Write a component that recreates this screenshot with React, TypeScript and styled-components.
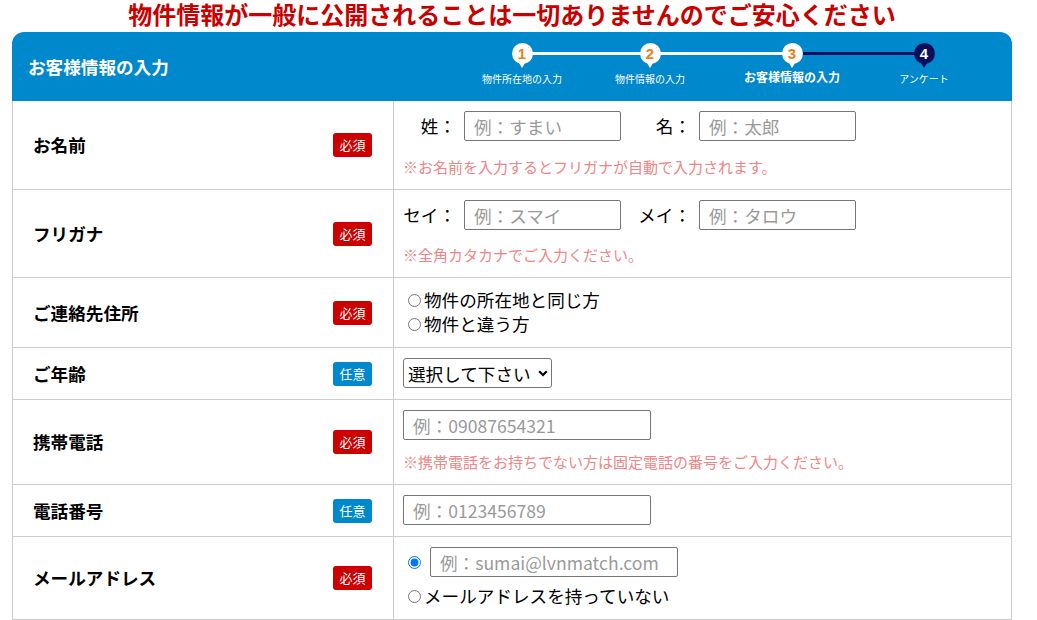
import React from "react";
import styled, { createGlobalStyle } from "styled-components";

const GlobalStyle = createGlobalStyle`
  html, body { margin: 0; padding: 0; background: #fff; }
  body {
    font-family: "Noto Sans CJK JP", "Noto Sans", sans-serif;
    color: #000;
    overflow: hidden;
  }
  * { box-sizing: border-box; }
`;

const Page = styled.div`
  width: 1037px;
  height: 620px;
  padding-left: 12px;
  overflow: hidden;
`;

const Notice = styled.h1`
  width: 1000px;
  height: 32px;
  margin: 0;
  padding-bottom: 4px;
  font-size: 24px;
  line-height: 28px;
  font-weight: 700;
  color: #c80000;
  text-align: center;
  letter-spacing: 0;
`;

const Header = styled.div`
  width: 1000px;
  height: 69px;
  background: #0088cc;
  border-radius: 12px 12px 0 0;
  display: flex;
  align-items: stretch;
  padding-left: 16px;
`;

const HeaderTitle = styled.h2`
  flex: 1;
  margin: 0;
  align-self: center;
  color: #fff;
  font-size: 17.6px;
  line-height: 24px;
  font-weight: 700;
`;

const Steps = styled.ol`
  display: flex;
  list-style: none;
  margin: 0 34px 0 0;
  padding: 0;
`;

const Step = styled.li<{ $w: number; $left?: string; $right?: string }>`
  position: relative;
  width: ${(p) => p.$w}px;
  display: flex;
  flex-direction: column;
  align-items: center;
  padding-top: 11px;
  &::before {
    content: "";
    position: absolute;
    top: 20px;
    left: 0;
    width: 50%;
    height: 3px;
    background: ${(p) => p.$left ?? "transparent"};
  }
  &::after {
    content: "";
    position: absolute;
    top: 20px;
    right: 0;
    width: 50%;
    height: 3px;
    background: ${(p) => p.$right ?? "transparent"};
  }
`;

const StepDot = styled.span<{ $dark?: boolean }>`
  position: relative;
  z-index: 1;
  width: 21px;
  height: 21px;
  border-radius: 50%;
  background: ${(p) => (p.$dark ? "#0a0f5c" : "#fff")};
  color: ${(p) => (p.$dark ? "#fff" : "#f07d22")};
  font-family: "Liberation Sans", Arial, sans-serif;
  font-size: 15px;
  font-weight: 700;
  line-height: 21px;
  text-align: center;
  &::after {
    content: "";
    position: absolute;
    left: 50%;
    bottom: -4px;
    transform: translateX(-50%);
    border-left: 3.5px solid transparent;
    border-right: 3.5px solid transparent;
    border-top: 5px solid ${(p) => (p.$dark ? "#0a0f5c" : "#fff")};
  }
`;

const StepLabel = styled.span<{ $active?: boolean }>`
  color: #fff;
  white-space: nowrap;
  font-size: ${(p) => (p.$active ? "12px" : "10px")};
  font-weight: ${(p) => (p.$active ? 700 : 400)};
  line-height: ${(p) => (p.$active ? "16px" : "14px")};
  margin-top: ${(p) => (p.$active ? "5px" : "8px")};
`;

const Form = styled.div`
  width: 1000px;
  border-left: 1px solid #ccc;
  border-right: 1px solid #ccc;
`;

const Row = styled.div`
  display: grid;
  grid-template-columns: 381px 1fr;
  border-bottom: 1px solid #ccc;
`;

const LabelCell = styled.div`
  display: flex;
  align-items: center;
  justify-content: space-between;
  padding: 0 21px 0 20px;
  border-right: 1px solid #ccc;
`;

const FieldName = styled.span`
  font-size: 17.6px;
  font-weight: 700;
  line-height: 24px;
`;

const Badge = styled.span<{ $optional?: boolean }>`
  width: 39px;
  height: 24px;
  border-radius: 3px;
  background: ${(p) => (p.$optional ? "#0088cc" : "#cc0000")};
  color: #fff;
  font-size: 13px;
  line-height: 24px;
  text-align: center;
`;

const FieldCell = styled.div`
  display: flex;
  flex-direction: column;
  justify-content: center;
  align-items: flex-start;
  padding: 10px 10px 11px 9px;
`;

const PairRow = styled.div`
  display: flex;
  align-items: center;
  gap: 17px;
`;

const Pair = styled.label`
  display: flex;
  align-items: center;
  gap: 8px;
`;

const PairLabel = styled.span`
  width: 53px;
  text-align: right;
  font-size: 17.6px;
  line-height: 24px;
  white-space: nowrap;
`;

const TextInput = styled.input<{ $w: number }>`
  width: ${(p) => p.$w}px;
  height: 30px;
  margin: 0;
  padding: 0 9px;
  border: 1px solid #767676;
  border-radius: 2px;
  font-family: "Noto Sans CJK JP", "Noto Sans", sans-serif;
  font-size: 17.6px;
  color: #000;
  background: #fff;
  &::placeholder { color: #9a9a9a; }
`;

const Note = styled.p<{ $gap: number }>`
  margin: ${(p) => p.$gap}px 0 0;
  font-size: 15px;
  line-height: 22px;
  color: #ef8585;
  white-space: nowrap;
`;

const Choice = styled.label`
  display: flex;
  align-items: center;
  font-size: 17.6px;
  line-height: 24px;
  white-space: nowrap;
`;

const Radio = styled.input`
  width: 13px;
  height: 13px;
  margin: 0 3px 0 5px;
`;

const EmailLine = styled.div`
  display: flex;
  align-items: center;
  gap: 6px;
`;

const ChoiceBelow = styled(Choice)`
  margin-top: 7px;
`;

const SelectBox = styled.div`
  position: relative;
  width: 149px;
  height: 30px;
`;

const Select = styled.select`
  appearance: none;
  width: 100%;
  height: 100%;
  margin: 0;
  padding: 0 20px 0 4px;
  border: 1px solid #767676;
  border-radius: 3px;
  background: #fff;
  color: #000;
  font-family: "Noto Sans CJK JP", "Noto Sans", sans-serif;
  font-size: 17.6px;
`;

const Chevron = styled.svg`
  position: absolute;
  right: 4px;
  top: 12px;
  width: 10px;
  height: 7px;
  pointer-events: none;
`;

export default function App() {
  return (
    <>
      <GlobalStyle />
      <Page>
        <Notice>物件情報が一般に公開されることは一切ありませんのでご安心ください</Notice>
        <Header>
          <HeaderTitle>お客様情報の入力</HeaderTitle>
          <Steps>
            <Step $w={128} $right="#fff">
              <StepDot>1</StepDot>
              <StepLabel>物件所在地の入力</StepLabel>
            </Step>
            <Step $w={128} $left="#fff" $right="#fff">
              <StepDot>2</StepDot>
              <StepLabel>物件情報の入力</StepLabel>
            </Step>
            <Step $w={156} $left="#fff" $right="#0a0f5c">
              <StepDot>3</StepDot>
              <StepLabel $active>お客様情報の入力</StepLabel>
            </Step>
            <Step $w={108} $left="#0a0f5c">
              <StepDot $dark>4</StepDot>
              <StepLabel>アンケート</StepLabel>
            </Step>
          </Steps>
        </Header>
        <Form>
          <Row>
            <LabelCell>
              <FieldName>お名前</FieldName>
              <Badge>必須</Badge>
            </LabelCell>
            <FieldCell>
              <PairRow>
                <Pair>
                  <PairLabel>姓：</PairLabel>
                  <TextInput $w={157} placeholder="例：すまい" />
                </Pair>
                <Pair>
                  <PairLabel>名：</PairLabel>
                  <TextInput $w={157} placeholder="例：太郎" />
                </Pair>
              </PairRow>
              <Note $gap={15}>※お名前を入力するとフリガナが自動で入力されます。</Note>
            </FieldCell>
          </Row>
          <Row>
            <LabelCell>
              <FieldName>フリガナ</FieldName>
              <Badge>必須</Badge>
            </LabelCell>
            <FieldCell>
              <PairRow>
                <Pair>
                  <PairLabel>セイ：</PairLabel>
                  <TextInput $w={157} placeholder="例：スマイ" />
                </Pair>
                <Pair>
                  <PairLabel>メイ：</PairLabel>
                  <TextInput $w={157} placeholder="例：タロウ" />
                </Pair>
              </PairRow>
              <Note $gap={14}>※全角カタカナでご入力ください。</Note>
            </FieldCell>
          </Row>
          <Row>
            <LabelCell>
              <FieldName>ご連絡先住所</FieldName>
              <Badge>必須</Badge>
            </LabelCell>
            <FieldCell>
              <Choice>
                <Radio type="radio" name="addr" />
                物件の所在地と同じ方
              </Choice>
              <Choice>
                <Radio type="radio" name="addr" />
                物件と違う方
              </Choice>
            </FieldCell>
          </Row>
          <Row>
            <LabelCell>
              <FieldName>ご年齢</FieldName>
              <Badge $optional>任意</Badge>
            </LabelCell>
            <FieldCell>
              <SelectBox>
                <Select defaultValue="">
                  <option value="">選択して下さい</option>
                </Select>
                <Chevron viewBox="0 0 10 7">
                  <path d="M1.2 1.2 L5 5 L8.8 1.2" fill="none" stroke="#000" strokeWidth="2.2" />
                </Chevron>
              </SelectBox>
            </FieldCell>
          </Row>
          <Row>
            <LabelCell>
              <FieldName>携帯電話</FieldName>
              <Badge>必須</Badge>
            </LabelCell>
            <FieldCell>
              <TextInput $w={248} placeholder="例：09087654321" />
              <Note $gap={11}>※携帯電話をお持ちでない方は固定電話の番号をご入力ください。</Note>
            </FieldCell>
          </Row>
          <Row>
            <LabelCell>
              <FieldName>電話番号</FieldName>
              <Badge $optional>任意</Badge>
            </LabelCell>
            <FieldCell>
              <TextInput $w={248} placeholder="例：0123456789" />
            </FieldCell>
          </Row>
          <Row>
            <LabelCell>
              <FieldName>メールアドレス</FieldName>
              <Badge>必須</Badge>
            </LabelCell>
            <FieldCell>
              <EmailLine>
                <Radio type="radio" name="mail" defaultChecked />
                <TextInput $w={248} placeholder="例：sumai@lvnmatch.com" />
              </EmailLine>
              <ChoiceBelow>
                <Radio type="radio" name="mail" />
                メールアドレスを持っていない
              </ChoiceBelow>
            </FieldCell>
          </Row>
        </Form>
      </Page>
    </>
  );
}
